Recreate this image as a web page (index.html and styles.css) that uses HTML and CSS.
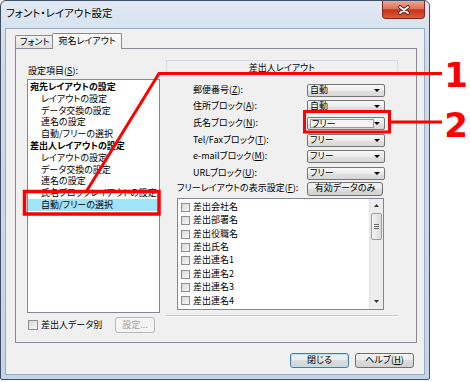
FILE: index.html
```html
<!DOCTYPE html>
<html lang="ja">
<head>
    <meta charset="UTF-8">
    <title>フォント・レイアウト設定</title>
    <link rel="stylesheet" href="styles.css">
</head>
<body>
    <div class="window">
        <div class="titlebar">
            <span class="title">フォント・レイアウト設定</span>
            <span class="close-btn">
                <svg width="14" height="10" viewBox="0 0 14 10">
                    <path d="M3 2 L11 8 M11 2 L3 8" stroke="#4a1d14" stroke-width="3.6" stroke-linecap="round"/>
                    <path d="M3 2 L11 8 M11 2 L3 8" stroke="#fff" stroke-width="2" stroke-linecap="round"/>
                </svg>
            </span>
        </div>
        <div class="client">
            <div class="tabs">
                <span class="tab">フォント</span>
                <span class="tab active">宛名レイアウト</span>
            </div>
            <div class="tab-page">
                <div class="page-grid">
                    <div class="left-col">
                        <div class="caption">設定項目(<u>S</u>):</div>
                        <ul class="tree">
                            <li class="group">宛先レイアウトの設定</li>
                            <li>レイアウトの設定</li>
                            <li>データ交換の設定</li>
                            <li>連名の設定</li>
                            <li>自動/フリーの選択</li>
                            <li class="group">差出人レイアウトの設定</li>
                            <li>レイアウトの設定</li>
                            <li>データ交換の設定</li>
                            <li>連名の設定</li>
                            <li>氏名ブロックレイアウトの設定</li>
                            <li class="selected">自動/フリーの選択</li>
                        </ul>
                    </div>
                    <div class="right-col">
                        <div class="section-head">差出人レイアウト</div>
                        <div class="fields">
                            <span>郵便番号(<u>Z</u>):</span>
                            <span class="combo"><span class="value">自動</span></span>
                            <span>住所ブロック(<u>A</u>):</span>
                            <span class="combo"><span class="value">自動</span></span>
                            <span>氏名ブロック(<u>N</u>):</span>
                            <span class="combo focus"><span class="value">フリー</span></span>
                            <span>Tel/Faxブロック(<u>T</u>):</span>
                            <span class="combo"><span class="value">フリー</span></span>
                            <span>e-mailブロック(<u>M</u>):</span>
                            <span class="combo"><span class="value">フリー</span></span>
                            <span>URLブロック(<u>U</u>):</span>
                            <span class="combo"><span class="value">フリー</span></span>
                        </div>
                        <div class="free-row">
                            <span>フリーレイアウトの表示設定(<u>F</u>):</span>
                            <span class="btn wide">有効データのみ</span>
                        </div>
                        <div class="check-list">
                            <ul>
                                <li><span class="check"></span>差出会社名</li>
                                <li><span class="check"></span>差出部署名</li>
                                <li><span class="check"></span>差出役職名</li>
                                <li><span class="check"></span>差出氏名</li>
                                <li><span class="check"></span>差出連名1</li>
                                <li><span class="check"></span>差出連名2</li>
                                <li><span class="check"></span>差出連名3</li>
                                <li><span class="check"></span>差出連名4</li>
                            </ul>
                            <div class="scrollbar">
                                <span class="sb-arrow">
                                    <svg width="5" height="3" viewBox="0 0 5 3"><path d="M0 3 L2.5 0 L5 3Z" fill="#333"/></svg>
                                </span>
                                <span class="sb-thumb">
                                    <svg width="5" height="5" viewBox="0 0 5 5"><path d="M0 0.5 H5 M0 2.5 H5 M0 4.5 H5" stroke="#6b6b6b" stroke-width="1"/></svg>
                                </span>
                                <span class="sb-track"></span>
                                <span class="sb-arrow">
                                    <svg width="5" height="3" viewBox="0 0 5 3"><path d="M0 0 L2.5 3 L5 0Z" fill="#333"/></svg>
                                </span>
                            </div>
                        </div>
                        <div class="separator"></div>
                    </div>
                </div>
                <div class="page-foot">
                    <span class="check-label"><span class="check"></span>差出人データ別</span>
                    <span class="btn disabled">設定...</span>
                </div>
            </div>
            <div class="dialog-buttons">
                <span class="btn default">閉じる</span>
                <span class="btn">ヘルプ(<u>H</u>)</span>
            </div>
        </div>
    </div>

    <!-- red annotations laid over the screenshot -->
    <svg class="callouts" width="470" height="382" viewBox="0 0 470 382">
        <polyline points="442,73.5 159,73.5 86,192" fill="none" stroke="#f00" stroke-width="3"/>
        <rect x="24.5" y="191.5" width="134.5" height="22.5" fill="none" stroke="#f00" stroke-width="3.5"/>
        <rect x="304.5" y="111.5" width="85" height="20.5" fill="none" stroke="#f00" stroke-width="3"/>
        <line x1="389" y1="122" x2="442" y2="122" stroke="#f00" stroke-width="3"/>
        <text class="num" x="456" y="87">1</text>
        <text class="num" x="456" y="137">2</text>
    </svg>
</body>
</html>
```

FILE: styles.css
```css
/*reset*/
* {
    margin: 0;
    padding: 0;
    box-sizing: border-box;
}
li {
    list-style: none;
}
u {
    text-underline-offset: 1px;
}

/*default*/
body {
    position: relative;
    width: 470px;
    height: 382px;
    overflow: hidden;
    background-color: #fff;
    color: #000;
    font: 9px/1.2 "Noto Sans CJK JP", "Noto Sans", sans-serif;
    font-feature-settings: "palt";
}

/*window frame*/
.window {
    display: flex;
    flex-direction: column;
    width: 430px;
    height: 380px;
    padding: 0 4px 4px;
    border: 1px solid #3f4e61;
    border-radius: 6px 6px 2px 2px;
    background: linear-gradient(#e1e9f4, #cddbec 60px, #c5d5e9);
}
.titlebar {
    display: flex;
    justify-content: space-between;
    height: 27px;
}
.title {
    padding: 6px 0 0 1px;
    font-size: 10.5px;
}
.close-btn {
    display: flex;
    align-items: center;
    justify-content: center;
    width: 43px;
    height: 18px;
    border: 1px solid #83291b;
    border-top: none;
    border-radius: 0 0 4px 4px;
    background: linear-gradient(#efa595, #e07158 45%, #c7321a 52%, #dd5a3a);
}
.client {
    flex: 1;
    padding: 4px 7px 0 9px;
    background-color: #f0f0f0;
    border: 1px solid #9aabc0;
}

/*tabs*/
.tabs {
    display: flex;
    align-items: flex-end;
    height: 15px;
}
.tab {
    height: 13px;
    padding: 0 3px 0 4px;
    border: 1px solid #898c95;
    border-bottom: none;
    border-radius: 2px 2px 0 0;
    background: linear-gradient(#f4f4f4, #e1e1e1);
    line-height: 12px;
}
.tab.active {
    position: relative;
    z-index: 1;
    height: 16px;
    margin: 0 0 -1px -1px;
    padding: 1px 5px 0;
    background: linear-gradient(#fbfbfb, #f0f0f0);
}
.tab-page {
    width: 402px;
    height: 295px;
    padding: 11px 0 0 11px;
    border: 1px solid #898c95;
}
.page-grid {
    display: grid;
    grid-template-columns: 133px 232px;
    column-gap: 6px;
    height: 257px;
}

/*left tree*/
.caption {
    margin: 5px 0 2px 1px;
    line-height: 12px;
}
.tree {
    height: 234px;
    padding-top: 1px;
    border: 1px solid #828790;
    background-color: #fff;
}
.tree li {
    height: 11.8px;
    padding-left: 13px;
    line-height: 11.8px;
    white-space: nowrap;
}
.tree .group {
    padding-left: 2px;
    font-weight: bold;
}
.tree .selected {
    background-color: #9fe4f8;
}

/*right side*/
.section-head {
    height: 16px;
    border: 1px solid #d3dce3;
    border-bottom: none;
    line-height: 14px;
    text-align: center;
}
.fields {
    display: grid;
    grid-template-columns: 114px 78px;
    grid-auto-rows: 16.6px;
    align-items: center;
    margin-top: 6px;
    padding-left: 27px;
}
.combo {
    display: flex;
    align-items: center;
    height: 13px;
    padding-left: 2px;
    border: 1px solid #767676;
    border-radius: 2px;
    background: linear-gradient(#f8f8f8, #ececec 50%, #e0e0e0 51%, #d8d8d8);
}
.combo::after {
    content: "";
    margin: 0 4px 0 auto;
    border-left: 3px solid transparent;
    border-right: 3px solid transparent;
    border-top: 3px solid #000;
}
.combo.focus .value {
    width: 64px;
    height: 9px;
    padding-left: 1px;
    border: 1px solid #9a9a9a;
    background-color: #f4f4f4;
    line-height: 7px;
}
.free-row {
    display: flex;
    align-items: center;
    justify-content: space-between;
    height: 14px;
    padding: 0 15px 0 11px;
}
.btn {
    display: flex;
    align-items: center;
    justify-content: center;
    height: 14px;
    border: 1px solid #707070;
    border-radius: 3px;
    background: linear-gradient(#f3f3f3, #ebebeb 49%, #dddddd 50%, #d2d2d2);
    white-space: nowrap;
}
.btn.wide {
    width: 76px;
}
.check-list {
    display: flex;
    width: 207px;
    height: 112px;
    margin: 2px 0 0 11px;
    border: 1px solid #828790;
    background-color: #fff;
}
.check-list ul {
    flex: 1;
    padding: 2px 0 0 3px;
}
.check-list li {
    display: flex;
    align-items: center;
    gap: 3px;
    height: 13.4px;
}
.check {
    width: 9px;
    height: 9px;
    border: 1px solid #8e8f8f;
    background: linear-gradient(135deg, #d8d8d8, #f7f7f7);
}
.scrollbar {
    display: flex;
    flex-direction: column;
    width: 14px;
    background-color: #ededed;
    border-left: 1px solid #e2e2e2;
}
.sb-arrow {
    display: flex;
    align-items: center;
    justify-content: center;
    height: 14px;
}
.sb-thumb {
    display: flex;
    align-items: center;
    justify-content: center;
    height: 27px;
    margin: 0 1px;
    border: 1px solid #9b9b9b;
    border-radius: 2px;
    background: linear-gradient(90deg, #f4f4f4, #dadada);
}
.sb-track {
    flex: 1;
}
.separator {
    height: 2px;
    margin-top: 5px;
    border-top: 1px solid #c9c9c9;
    border-bottom: 1px solid #fff;
}

/*bottom of page*/
.page-foot {
    display: flex;
    align-items: center;
    height: 16px;
}
.check-label {
    display: flex;
    align-items: center;
    gap: 3px;
    width: 88px;
    padding-left: 1px;
}
.check-label .check {
    width: 10px;
    height: 10px;
}
.btn.disabled {
    width: 40px;
    height: 16px;
    border-color: #b5b9bc;
    background: #f4f4f4;
    color: #a3a3a3;
}
.dialog-buttons {
    display: flex;
    justify-content: flex-end;
    gap: 6px;
    margin: 10px 3px 0 0;
}
.dialog-buttons .btn {
    width: 59px;
    height: 15px;
}
.btn.default {
    border-color: #3c7fb1;
    box-shadow: inset 0 0 0 1px #b6e2f7;
}

/*annotations*/
.callouts {
    position: absolute;
    top: 0;
    left: 0;
    pointer-events: none;
}
.num {
    fill: #f00;
    font: bold 34px "DejaVu Sans", sans-serif;
    text-anchor: middle;
}
```
